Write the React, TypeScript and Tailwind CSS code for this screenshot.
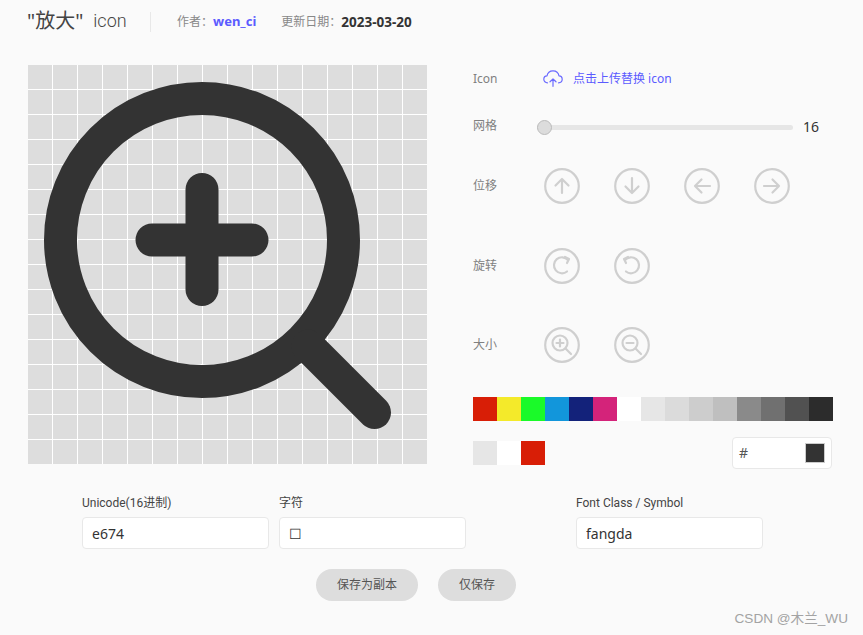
import React from 'react';

const font = "font-['Noto_Sans','Noto_Sans_CJK_SC',sans-serif]";

const colors = [
  'bg-[#d81e06]', 'bg-[#f4ea2a]', 'bg-[#1afa29]', 'bg-[#1296db]', 'bg-[#13227a]',
  'bg-[#d4237a]', 'bg-[#ffffff]', 'bg-[#e6e6e6]', 'bg-[#dbdbdb]', 'bg-[#cdcdcd]',
  'bg-[#bfbfbf]', 'bg-[#8a8a8a]', 'bg-[#707070]', 'bg-[#515151]', 'bg-[#2c2c2c]',
];

const recent = ['bg-[#e6e6e6]', 'bg-[#ffffff]', 'bg-[#d81e06]'];

const CircleButton: React.FC<{ children: React.ReactNode }> = ({ children }) => (
  <svg width="36" height="36" viewBox="0 0 36 36" fill="none" stroke="#cfcfcf" strokeWidth="2.200" strokeLinecap="round" strokeLinejoin="round" className="shrink-0">
    <circle cx="18" cy="18" r="16.800" />
    {children}
  </svg>
);

const Row: React.FC<{ label: string; className?: string; children: React.ReactNode }> = ({ label, className, children }) => (
  <div className={`flex items-center ${className ?? ''}`}>
    <div className="w-[71px] text-xs text-[#808080]">{label}</div>
    <div className="flex gap-[34px]">{children}</div>
  </div>
);

const Field: React.FC<{ label: string; value: string; className?: string }> = ({ label, value, className }) => (
  <div className={`w-[187px] ${className ?? ''}`}>
    <div className="h-4 font-['Roboto','Noto_Sans_CJK_SC',sans-serif] text-xs leading-[14px] text-[#444]">{label}</div>
    <input
      readOnly
      value={value}
      className="mt-[5px] h-8 w-full rounded border border-[#e8e8e8] bg-white px-[9px] text-sm text-[#333] outline-none"
    />
  </div>
);

export default function App() {
  return (
    <div className={`relative h-[635px] w-[863px] overflow-hidden bg-[#fafafa] ${font}`}>
      {/* Header */}
      <div className="flex h-[65px] items-start pl-[27px] pt-[11px]">
        <div className="flex h-5 w-[98px] shrink-0 items-center whitespace-nowrap text-xl leading-5 text-[#444]">
          <span className="shrink-0">"放大"</span>
          <span className="ml-[10px] shrink-0 font-['Roboto',sans-serif] text-[18px] font-light">icon</span>
        </div>
        <div className="ml-[25px] mt-px h-5 w-px bg-[#e8e8e8]"></div>
        <div className="ml-[26px] mt-px flex h-5 items-center whitespace-nowrap text-xs text-[#888]">
          作者：<span className="text-[13px] font-bold text-[#5b5bff]">wen_ci</span>
        </div>
        <div className="ml-[25px] mt-px flex h-5 items-center whitespace-nowrap text-xs text-[#888]">
          更新日期：<span className="text-[13.500px] font-bold text-[#333]">2023-03-20</span>
        </div>
      </div>

      <div className="flex pl-[28px]">
        {/* Canvas */}
        <div className="relative h-[399px] w-[399px] shrink-0 bg-white">
          <div className="grid grid-cols-[repeat(16,24px)] grid-rows-[repeat(16,24px)] gap-px">
            {Array.from({ length: 256 }).map((_, i) => (
              <div key={i} className="bg-[#dddddd]"></div>
            ))}
          </div>
          <svg width="399" height="399" viewBox="0 0 399 399" fill="none" stroke="#333333" strokeLinecap="round" className="absolute left-0 top-0">
            <circle cx="174" cy="175" r="141.500" strokeWidth="33" />
            <path d="M174 124.500V224.500M124 175H224" strokeWidth="33" />
            <path d="M280 281L346.500 347.500" strokeWidth="33" />
          </svg>
        </div>

        {/* Controls */}
        <div className="ml-[46px] w-[360px]">
          <div className="flex h-[27px] items-center">
            <div className="w-[70px] text-xs text-[#808080]">Icon</div>
            <svg width="20" height="17" viewBox="0 0 20 17" fill="none" stroke="#6a6aff" strokeWidth="1.200" strokeLinecap="round" strokeLinejoin="round" className="mb-[1px] shrink-0">
              <path d="M4.500 12.800C2.400 12.800 0.800 11.300 0.800 9.300C0.800 7.400 2.200 6 4 5.900C4.500 3 7 0.800 10 0.800C13 0.800 15.500 3 16 5.900C17.800 6 19.200 7.400 19.200 9.300C19.200 11.300 17.600 12.800 15.500 12.800" />
              <path d="M10 16.300V9M7 11.800L10 9L13 11.800" />
            </svg>
            <div className="ml-[10px] text-xs text-[#5b5bff]">点击上传替换 icon</div>
          </div>

          <div className="mt-[25px] flex h-5 items-center">
            <div className="mb-[2px] w-[64px] text-xs text-[#808080]">网格</div>
            <div className="relative h-[5px] w-[256px] rounded-full bg-[#e6e6e6]">
              <div className="absolute left-0 top-[-5px] h-[15px] w-[15px] rounded-full border border-[#bbb] bg-[#dcdcdc]"></div>
            </div>
            <div className="ml-[10px] text-sm text-[#333]">16</div>
          </div>

          <Row label="位移" className="mt-[31px]">
            <CircleButton><path d="M18 25V11M11.500 17.500L18 11L24.500 17.500" /></CircleButton>
            <CircleButton><path d="M18 10V24.500M11.500 18.500L18 25L24.500 18.500" /></CircleButton>
            <CircleButton><path d="M26 18H11M17.500 11.500L11 18L17.500 24.500" /></CircleButton>
            <CircleButton><path d="M10 18H25M18.500 11.500L25 18L18.500 24.500" /></CircleButton>
          </Row>

          <Row label="旋转" className="mt-[44px]">
            <CircleButton>
              <path d="M23 23.500A8 8 0 1 1 24 12" />
              <path d="M21 9L25 11L23 15" />
            </CircleButton>
            <CircleButton>
              <path d="M12 23.500A8 8 0 1 0 11 12" />
              <path d="M14 9L10 11L12 15" />
            </CircleButton>
          </Row>

          <Row label="大小" className="mt-[43px]">
            <CircleButton>
              <circle cx="16" cy="16" r="7.500" />
              <path d="M21.500 21.500L27 27M16 12.500V19.500M12.500 16H19.500" />
            </CircleButton>
            <CircleButton>
              <circle cx="16" cy="16" r="7.500" />
              <path d="M21.500 21.500L27 27M12.500 16H19.500" />
            </CircleButton>
          </Row>

          {/* Palette */}
          <div className="mt-[34px] flex">
            {colors.map((c) => (
              <div key={c} className={`h-6 w-6 ${c}`}></div>
            ))}
          </div>

          <div className="mt-4 flex items-center justify-between">
            <div className="flex">
              {recent.map((c) => (
                <div key={c} className={`h-6 w-6 ${c}`}></div>
              ))}
            </div>
            <div className="mr-px flex h-8 w-[100px] items-center justify-between rounded border border-[#e8e8e8] bg-white pl-[6px] pr-[6px]">
              <span className="text-sm text-[#555]">#</span>
              <div className="h-5 w-5 border border-[#ccc] bg-[#333333]"></div>
            </div>
          </div>
        </div>
      </div>

      {/* Form */}
      <div className="mt-[27px] flex pl-[82px]">
        <Field label="Unicode(16进制)" value="e674" />
        <Field label="字符" value="☐" className="ml-[10px]" />
        <Field label="Font Class / Symbol" value="fangda" className="ml-[110px]" />
      </div>

      <div className="mt-5 flex gap-5 pl-[316px]">
        <button className="h-8 w-[102px] rounded-full bg-[#dddddd] text-xs text-[#555]">保存为副本</button>
        <button className="h-8 w-[78px] rounded-full bg-[#dddddd] text-xs text-[#555]">仅保存</button>
      </div>

      <div className="absolute right-[15px] top-[609px] font-['Liberation_Sans','Noto_Sans_CJK_SC',sans-serif] text-[13.600px] text-[#a3a3a3]">CSDN @木兰_WU</div>
    </div>
  );
}
